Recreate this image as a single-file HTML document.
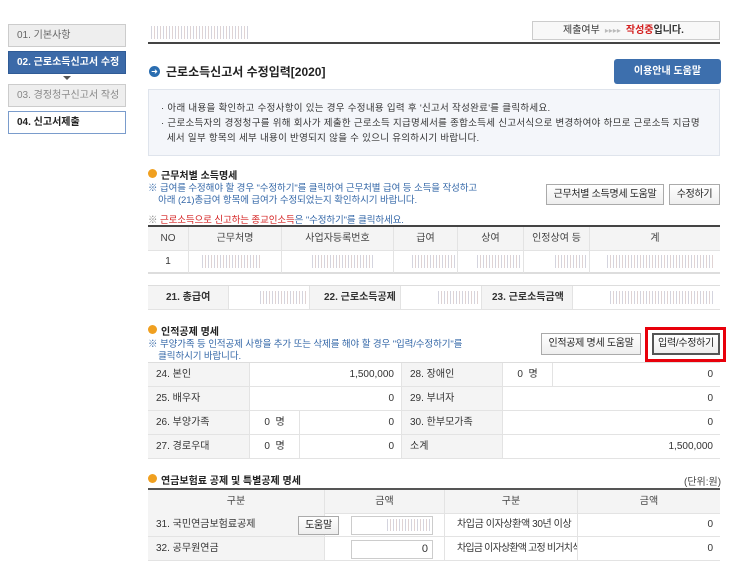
<!DOCTYPE html>
<html><head><meta charset="utf-8"><style>
*{margin:0;padding:0;box-sizing:border-box}
body{width:731px;height:554px;overflow:hidden;background:#fff;font-family:"Liberation Sans","Noto Sans CJK KR",sans-serif;font-size:11px;color:#333;position:relative}
div{white-space:nowrap}
.a{position:absolute;white-space:nowrap}
.nav{position:absolute;left:8px;width:118px;height:23px;line-height:21px;padding-left:8px;font-size:10px;border:1px solid #ccc;background:#eee;color:#666;overflow:hidden}
.blur{position:absolute;background:repeating-linear-gradient(90deg,#fff 0 2px,#c9c9d6 2px 3px,#fff 3px 5px,#d8c8c8 5px 6px);opacity:.8}
.btn{position:absolute;border:1px solid #aaa;background:linear-gradient(#fff,#eee);text-align:center;font-size:10px;color:#222;line-height:20px;overflow:hidden;letter-spacing:-0.3px}
.cell{position:absolute;border-right:1px solid #e3e3e3;border-bottom:1px solid #e3e3e3;line-height:23px;font-size:10px;overflow:hidden}
.h{background:#f4f4f4;text-align:center;color:#444}
.l{background:#f4f4f4;padding-left:8px;color:#333}
.r{text-align:right;padding-right:7px}
.ic{position:absolute;width:9px;height:9px;border-radius:50%;background:#f0a020}
.t{font-weight:bold;font-size:10px;color:#222}
.note{color:#3568a8;font-size:9.5px;letter-spacing:-0.1px}
</style></head><body>
<div class="nav" style="top:24px">01. 기본사항</div>
<div class="nav" style="top:51px;background:#3c6aa8;border-color:#2f5b96;color:#fff;font-weight:bold">02. 근로소득신고서 수정</div>
<div class="a" style="left:63px;top:76px;width:0;height:0;border-left:4px solid transparent;border-right:4px solid transparent;border-top:4px solid #555"></div>
<div class="nav" style="top:84px;color:#888">03. 경정청구신고서 작성</div>
<div class="nav" style="top:111px;background:#fff;border-color:#7a9ccc;color:#222;font-weight:bold">04. 신고서제출</div>

<div class="blur" style="left:149px;top:26px;width:100px;height:13px"></div>
<div class="a" style="left:148px;top:42px;width:572px;height:2px;background:#444"></div>
<div class="a" style="left:532px;top:21px;width:188px;height:19px;border:1px solid #ccc;background:#f8f8f8;line-height:17px;font-size:10px;padding-left:30px">제출여부 <span style="color:#bbb;font-size:8px">&nbsp;▸▸▸▸&nbsp;</span> <span style="color:#d42020;font-weight:bold">작성중</span><b>입니다.</b></div>

<div class="a" style="left:149px;top:66px;width:11px;height:11px;border-radius:50%;background:#2a6db0;color:#fff;font-size:8px;line-height:11px;text-align:center">➜</div>
<div class="a" style="left:166px;top:63px;font-size:12px;font-weight:bold;color:#222;line-height:18px">근로소득신고서 수정입력[2020]</div>
<div class="a" style="left:614px;top:59px;width:107px;height:25px;border-radius:3px;background:#3d6fad;color:#fff;font-weight:bold;text-align:center;line-height:25px;font-size:10px">이용안내 도움말</div>

<div class="a" style="left:148px;top:89px;width:572px;height:67px;background:#f4f6fa;border:1px solid #dfe4ec;font-size:9.5px;line-height:15px;padding:11px 0 0 12px;color:#333;letter-spacing:0.3px">
· 아래 내용을 확인하고 수정사항이 있는 경우 수정내용 입력 후 '신고서 작성완료'를 클릭하세요.<br>
· 근로소득자의 경정청구를 위해 회사가 제출한 근로소득 지급명세서를 종합소득세 신고서식으로 변경하여야 하므로 근로소득 지급명<br>&nbsp;&nbsp;세서 일부 항목의 세부 내용이 반영되지 않을 수 있으니 유의하시기 바랍니다.</div>

<div class="ic" style="left:148px;top:169px"></div>
<div class="a t" style="left:161px;top:167px">근무처별 소득명세</div>
<div class="a note" style="left:148px;top:183px;line-height:12px">※ 급여를 수정해야 할 경우 "수정하기"를 클릭하여 근무처별 급여 등 소득을 작성하고<br>&nbsp;&nbsp;&nbsp;&nbsp;아래 (21)총급여 항목에 급여가 수정되었는지 확인하시기 바랍니다.</div>
<div class="btn" style="left:546px;top:184px;width:118px;height:21px">근무처별 소득명세 도움말</div>
<div class="btn" style="left:669px;top:184px;width:51px;height:21px">수정하기</div>
<div class="a note" style="left:148px;top:212px"><span style="color:#888">※</span> <span style="color:#d42020">근로소득으로 신고하는 종교인소득</span>은 "수정하기"를 클릭하세요.</div>

<div class="a" style="left:148px;top:225px;width:572px;height:2px;background:#444"></div>
<div class="cell h" style="left:148px;top:227px;width:41px">NO</div>
<div class="cell h" style="left:189px;top:227px;width:93px">근무처명</div>
<div class="cell h" style="left:282px;top:227px;width:112px">사업자등록번호</div>
<div class="cell h" style="left:394px;top:227px;width:64px">급여</div>
<div class="cell h" style="left:458px;top:227px;width:66px">상여</div>
<div class="cell h" style="left:524px;top:227px;width:66px">인정상여 등</div>
<div class="cell h" style="left:590px;top:227px;width:130px;border-right:0">계</div>
<div class="cell" style="left:148px;top:250px;width:41px;text-align:center;height:24px;border-bottom:2px solid #ddd">1</div>
<div class="cell" style="left:189px;top:250px;width:93px;height:24px;border-bottom:2px solid #ddd"></div>
<div class="cell" style="left:282px;top:250px;width:112px;height:24px;border-bottom:2px solid #ddd"></div>
<div class="cell" style="left:394px;top:250px;width:64px;height:24px;border-bottom:2px solid #ddd"></div>
<div class="cell" style="left:458px;top:250px;width:66px;height:24px;border-bottom:2px solid #ddd"></div>
<div class="cell" style="left:524px;top:250px;width:66px;height:24px;border-bottom:2px solid #ddd"></div>
<div class="cell" style="left:590px;top:250px;width:130px;height:24px;border-right:0;border-bottom:2px solid #ddd"></div>
<div class="blur" style="left:200px;top:255px;width:62px;height:13px"></div>
<div class="blur" style="left:310px;top:255px;width:65px;height:13px"></div>
<div class="blur" style="left:410px;top:255px;width:45px;height:13px"></div>
<div class="blur" style="left:475px;top:255px;width:45px;height:13px"></div>
<div class="blur" style="left:553px;top:255px;width:35px;height:13px"></div>
<div class="blur" style="left:605px;top:255px;width:108px;height:13px"></div>

<div class="a" style="left:148px;top:285px;width:572px;height:1px;background:#ddd"></div>
<div class="cell l" style="left:148px;top:286px;width:81px;height:24px;font-weight:bold;padding-left:18px">21. 총급여</div>
<div class="cell" style="left:229px;top:286px;width:81px;height:24px"></div>
<div class="cell l" style="left:310px;top:286px;width:91px;height:24px;font-weight:bold;padding-left:14px">22. 근로소득공제</div>
<div class="cell" style="left:401px;top:286px;width:81px;height:24px"></div>
<div class="cell l" style="left:482px;top:286px;width:91px;height:24px;font-weight:bold;padding-left:10px">23. 근로소득금액</div>
<div class="cell" style="left:573px;top:286px;width:147px;height:24px;border-right:0"></div>
<div class="blur" style="left:258px;top:291px;width:48px;height:13px"></div>
<div class="blur" style="left:436px;top:291px;width:42px;height:13px"></div>
<div class="blur" style="left:608px;top:291px;width:106px;height:13px"></div>

<div class="ic" style="left:148px;top:325px"></div>
<div class="a t" style="left:161px;top:323px">인적공제 명세</div>
<div class="a note" style="left:148px;top:339px;line-height:12px">※ 부양가족 등 인적공제 사항을 추가 또는 삭제를 해야 할 경우 "입력/수정하기"를<br>&nbsp;&nbsp;&nbsp;&nbsp;클릭하시기 바랍니다.</div>
<div class="btn" style="left:541px;top:333px;width:100px;height:22px">인적공제 명세 도움말</div>
<div class="a" style="left:645px;top:327px;width:81px;height:35px;border:3px solid #e8000b"></div>
<div class="btn" style="left:652px;top:333px;width:68px;height:22px;border:2px solid #555;line-height:18px">입력/수정하기</div>

<div class="a" style="left:148px;top:362px;width:572px;height:1px;background:#ddd"></div>
<div class="cell l" style="left:148px;top:363px;width:102px;height:24px">24. 본인</div>
<div class="cell r" style="left:250px;top:363px;width:152px;height:24px">1,500,000</div>
<div class="cell l" style="left:402px;top:363px;width:101px;height:24px">28. 장애인</div>
<div class="cell" style="left:503px;top:363px;width:50px;height:24px;text-align:center">0 &nbsp;명</div>
<div class="cell r" style="left:553px;top:363px;width:167px;height:24px;border-right:0">0</div>

<div class="cell l" style="left:148px;top:387px;width:102px;height:24px">25. 배우자</div>
<div class="cell r" style="left:250px;top:387px;width:152px;height:24px">0</div>
<div class="cell l" style="left:402px;top:387px;width:101px;height:24px">29. 부녀자</div>
<div class="cell r" style="left:503px;top:387px;width:217px;height:24px;border-right:0">0</div>

<div class="cell l" style="left:148px;top:411px;width:102px;height:24px">26. 부양가족</div>
<div class="cell" style="left:250px;top:411px;width:50px;height:24px;text-align:center">0 &nbsp;명</div>
<div class="cell r" style="left:300px;top:411px;width:102px;height:24px">0</div>
<div class="cell l" style="left:402px;top:411px;width:101px;height:24px">30. 한부모가족</div>
<div class="cell r" style="left:503px;top:411px;width:217px;height:24px;border-right:0">0</div>

<div class="cell l" style="left:148px;top:435px;width:102px;height:24px">27. 경로우대</div>
<div class="cell" style="left:250px;top:435px;width:50px;height:24px;text-align:center">0 &nbsp;명</div>
<div class="cell r" style="left:300px;top:435px;width:102px;height:24px">0</div>
<div class="cell l" style="left:402px;top:435px;width:101px;height:24px">소계</div>
<div class="cell r" style="left:503px;top:435px;width:217px;height:24px;border-right:0">1,500,000</div>

<div class="ic" style="left:148px;top:474px"></div>
<div class="a t" style="left:161px;top:472px">연금보험료 공제 및 특별공제 명세</div>
<div class="a" style="left:684px;top:473px;font-size:10px;color:#444">(단위:원)</div>

<div class="a" style="left:148px;top:488px;width:572px;height:2px;background:#555"></div>
<div class="cell h" style="left:148px;top:490px;width:177px">구분</div>
<div class="cell h" style="left:325px;top:490px;width:120px">금액</div>
<div class="cell h" style="left:445px;top:490px;width:133px">구분</div>
<div class="cell h" style="left:578px;top:490px;width:142px;border-right:0">금액</div>
<div class="cell l" style="left:148px;top:513px;width:177px;height:24px">31. 국민연금보험료공제</div>
<div class="btn" style="left:298px;top:516px;width:41px;height:19px;line-height:17px;z-index:2">도움말</div>
<div class="cell" style="left:325px;top:513px;width:120px;height:24px"></div>
<div class="a" style="left:351px;top:516px;width:82px;height:19px;border:1px solid #ccc;background:#fff"></div>
<div class="blur" style="left:385px;top:519px;width:45px;height:12px"></div>
<div class="cell" style="left:445px;top:513px;width:133px;height:24px;padding-left:12px;letter-spacing:-0.4px">차입금 이자상환액 30년 이상</div>
<div class="cell r" style="left:578px;top:513px;width:142px;height:24px;border-right:0">0</div>
<div class="cell l" style="left:148px;top:537px;width:177px;height:24px">32. 공무원연금</div>
<div class="cell" style="left:325px;top:537px;width:120px;height:24px"></div>
<div class="a" style="left:351px;top:540px;width:82px;height:19px;border:1px solid #ccc;background:#fff;text-align:right;padding-right:4px;line-height:17px">0</div>
<div class="cell" style="left:445px;top:537px;width:133px;height:24px;padding-left:12px;letter-spacing:-0.8px">차입금 이자상환액 고정 비거치식대출</div>
<div class="cell r" style="left:578px;top:537px;width:142px;height:24px;border-right:0">0</div>
</body></html>
